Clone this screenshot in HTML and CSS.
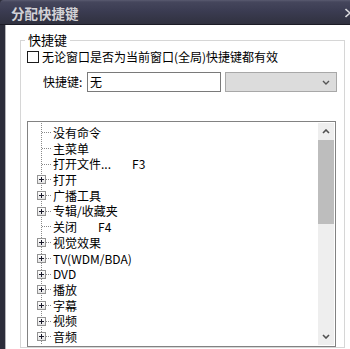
FILE: index.html
```html
<!DOCTYPE html>
<html lang="zh-CN">
<head>
<meta charset="utf-8">
<title>分配快捷键</title>
<link rel="stylesheet" href="styles.css">
</head>
<body>
<div class="window">
  <div class="titlebar">
    <span class="title">分配快捷键</span>
    <svg class="close-peek" width="5" height="10" viewBox="0 0 5 10"><path d="M0.5 1 L5 5 M0.5 9 L5 5" stroke="#d8d8dc" stroke-width="1.6" fill="none"/></svg>
  </div>
  <div class="frame">
    <div class="client">
      <fieldset class="group">
        <legend class="group-title">快捷键</legend>
        <label class="check-row"><span class="checkbox"></span><span>无论窗口是否为当前窗口(全局)快捷键都有效</span></label>
        <div class="key-row">
          <span class="key-label">快捷键:</span>
          <div class="key-input">无</div>
          <div class="key-select"><svg width="8" height="5" viewBox="0 0 8 5"><path d="M1 1 L4 4 L7 1" stroke="#555" stroke-width="1.4" fill="none"/></svg></div>
        </div>
        <div class="listbox">
          <ul class="tree">
            <li class="node leaf"><span class="twig"></span><span class="label">没有命令</span></li>
            <li class="node leaf"><span class="twig"></span><span class="label">主菜单</span></li>
            <li class="node leaf"><span class="twig"></span><span class="label">打开文件...</span><span class="accel">F3</span></li>
            <li class="node"><span class="twig"><span class="plus"></span></span><span class="label">打开</span></li>
            <li class="node"><span class="twig"><span class="plus"></span></span><span class="label">广播工具</span></li>
            <li class="node"><span class="twig"><span class="plus"></span></span><span class="label">专辑/收藏夹</span></li>
            <li class="node leaf"><span class="twig"></span><span class="label">关闭</span><span class="accel">F4</span></li>
            <li class="node"><span class="twig"><span class="plus"></span></span><span class="label">视觉效果</span></li>
            <li class="node"><span class="twig"><span class="plus"></span></span><span class="label">TV(WDM/BDA)</span></li>
            <li class="node"><span class="twig"><span class="plus"></span></span><span class="label">DVD</span></li>
            <li class="node"><span class="twig"><span class="plus"></span></span><span class="label">播放</span></li>
            <li class="node"><span class="twig"><span class="plus"></span></span><span class="label">字幕</span></li>
            <li class="node"><span class="twig"><span class="plus"></span></span><span class="label">视频</span></li>
            <li class="node"><span class="twig"><span class="plus"></span></span><span class="label">音频</span></li>
          </ul>
          <div class="scrollbar">
            <div class="sb-btn"><svg width="8" height="5" viewBox="0 0 8 5"><path d="M1 4 L4 1 L7 4" stroke="#505050" stroke-width="1.6" fill="none"/></svg></div>
            <div class="sb-thumb"></div>
            <div class="sb-track"></div>
            <div class="sb-btn"><svg width="8" height="5" viewBox="0 0 8 5"><path d="M1 1 L4 4 L7 1" stroke="#505050" stroke-width="1.6" fill="none"/></svg></div>
          </div>
        </div>
      </fieldset>
    </div>
  </div>
</div>
</body>
</html>
```
FILE: styles.css
```css
* { box-sizing: border-box; }
html, body { margin: 0; padding: 0; }
body {
  width: 350px;
  height: 349px;
  overflow: hidden;
  background: #fff;
  color: #000;
  font-family: "Noto Sans CJK SC", "Noto Sans", sans-serif;
  font-size: 12px;
}
.window {
  width: 350px;
  height: 349px;
  display: flex;
  flex-direction: column;
  overflow: hidden;
  background: #2c2d3a;
}
.titlebar {
  flex: none;
  height: 25px;
  display: flex;
  align-items: center;
  justify-content: space-between;
  padding: 2px 0 0 11px;
  background: linear-gradient(#5a5b70 0, #45465c 2px, #3b3c52 45%, #30313f 100%);
  border-top-left-radius: 4px;
  border-bottom: 1px solid #1c1c26;
}
.title {
  color: #d2d2d6;
  font-weight: bold;
  font-size: 13.5px;
  line-height: 16px;
}
.close-peek { display: block; }
.frame {
  flex: 1;
  display: flex;
  padding-left: 5px;
  background: #2c2d3a;
}
.client {
  flex: 1;
  background: #fff;
  border-left: 1px solid #b4b4b8;
  padding: 8px 0 0 14px;
}
.group {
  margin: 0;
  padding: 0 0 0 4px;
  width: 325px;
  min-width: 0;
  border: 1px solid #d6d6d6;
}
.group-title {
  padding: 0 3px;
  font-size: 13px;
  line-height: 14px;
  height: 14px;
}
.check-row {
  display: flex;
  align-items: center;
  height: 16px;
  line-height: 16px;
  margin: 2px 0 0 2px;
}
.checkbox {
  width: 12px;
  height: 12px;
  border: 1px solid #1c1c1c;
  background: #fff;
  margin-right: 3px;
  flex: none;
}
.key-row {
  display: flex;
  align-items: center;
  height: 20px;
  margin-top: 7px;
  padding-left: 18px;
}
.key-label { width: 44px; flex: none; line-height: 20px; }
.key-input {
  width: 134px;
  height: 20px;
  border: 1px solid #7a7a7a;
  padding-left: 2px;
  line-height: 18px;
}
.key-select {
  width: 112px;
  height: 20px;
  margin-left: 4px;
  background: #dcdcdc;
  border: 1px solid #a8a8a8;
  display: flex;
  align-items: center;
  justify-content: flex-end;
  padding-right: 6px;
}
.key-select svg { display: block; }
.listbox {
  margin: 29px 0 0 2px;
  width: 309px;
  height: 226px;
  border: 1px solid #828282;
  padding: 1px;
  display: flex;
}
.tree {
  flex: 1;
  list-style: none;
  margin: 0;
  padding: 2px 0 0 0;
  overflow: hidden;
  background-image: repeating-linear-gradient(to bottom, #8a8a8a 0 1px, transparent 1px 2px);
  background-size: 1px 100%;
  background-position: 12px 0;
  background-repeat: no-repeat;
}
.node {
  display: flex;
  height: 15.7px;
  line-height: 15.7px;
  white-space: nowrap;
}
.twig {
  width: 24px;
  flex: none;
  display: flex;
  align-items: center;
  padding-left: 8px;
  background-image: repeating-linear-gradient(to right, #8a8a8a 0 1px, transparent 1px 2px);
  background-size: 9px 1px;
  background-position: 13px 50%;
  background-repeat: no-repeat;
}
.plus {
  width: 9px;
  height: 9px;
  border: 1px solid #939393;
  background:
    linear-gradient(#1a1a2a, #1a1a2a) center / 5px 1px no-repeat,
    linear-gradient(#1a1a2a, #1a1a2a) center / 1px 5px no-repeat,
    linear-gradient(#fff, #e4e4e4);
}
.accel { margin-left: 21px; }
.scrollbar {
  width: 16px;
  flex: none;
  display: flex;
  flex-direction: column;
  background: #eeeeee;
}
.sb-btn {
  height: 17px;
  flex: none;
  display: flex;
  align-items: center;
  justify-content: center;
}
.sb-btn svg { display: block; }
.sb-thumb { height: 84px; flex: none; background: #bdbdbd; }
.sb-track { flex: 1; }
```
